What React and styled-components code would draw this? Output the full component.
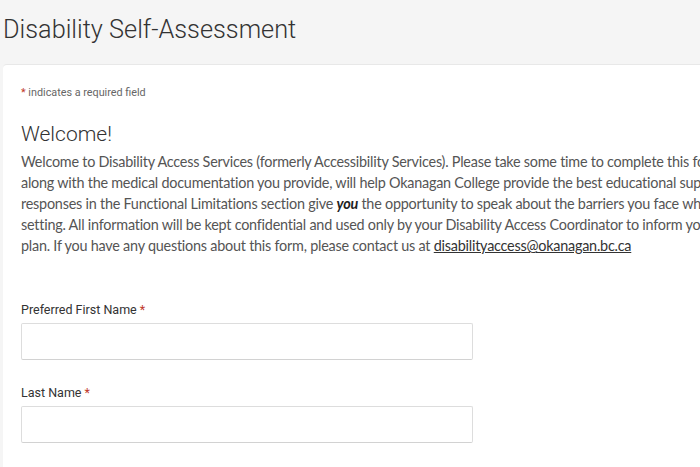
import React from 'react';
import styled, { createGlobalStyle } from 'styled-components';

const GlobalStyle = createGlobalStyle`
  html, body {
    margin: 0;
    padding: 0;
    background: #f5f5f5;
    overflow: hidden;
  }
  body {
    font-family: Roboto, "Liberation Sans", sans-serif;
    color: #333;
  }
`;

const Page = styled.div`
  padding: 14px 0 0 3px;
  width: 900px;
`;

const Title = styled.h1`
  margin: 0 0 18px;
  font-size: 25.3px;
  font-weight: 300;
  line-height: 32px;
  color: #333;
`;

const Card = styled.div`
  background: #fff;
  border-radius: 4px;
  border-top: 1px solid #e8e8e8;
  padding: 21px 18px 30px;
  min-height: 420px;
`;

const Required = styled.p`
  margin: 0 0 23px;
  font-size: 10.8px;
  color: #666;
`;

const Heading = styled.h2`
  margin: 0 0 5px;
  font-size: 21px;
  font-weight: 300;
  color: #333;
`;

const Intro = styled.p`
  margin: 0 0 46px;
  font-family: Lato, "Open Sans", sans-serif;
  font-size: 14.4px;
  letter-spacing: -0.23px;
  line-height: 21px;
  color: #555;
  white-space: nowrap;

  b {
    color: #222;
    font-weight: 700;
  }
  a {
    color: #333;
    text-decoration: underline;
  }
`;

const Star = styled.span`
  color: #c0392b;
`;

const Field = styled.div`
  display: flex;
  flex-direction: column;
  gap: 6px;
  margin-bottom: 25px;
  width: 452px;
`;

const Label = styled.label`
  font-size: 12.5px;
  color: #333;
`;

const Input = styled.input`
  height: 37px;
  box-sizing: border-box;
  border: 1px solid #ddd;
  border-bottom-color: #d2d2d2;
  border-radius: 2px;
  background: #fff;
  font-family: inherit;
`;

export default function App() {
  return (
    <>
      <GlobalStyle />
      <Page>
        <Title>Disability Self-Assessment</Title>
        <Card>
          <Required><Star>*</Star> indicates a required field</Required>
          <Heading>Welcome!</Heading>
          <Intro>
            Welcome to Disability Access Services (formerly Accessibility Services). Please take some time to complete this form. This form,<br />
            along with the medical documentation you provide, will help Okanagan College provide the best educational support. Your<br />
            responses in the Functional Limitations section give <b><i>you</i></b> the opportunity to speak about the barriers you face while in a learning<br />
            setting. All information will be kept confidential and used only by your Disability Access Coordinator to inform your accommodation<br />
            plan. If you have any questions about this form, please contact us at <a href="#">disabilityaccess@okanagan.bc.ca </a>
          </Intro>
          <Field>
            <Label>Preferred First Name <Star>*</Star></Label>
            <Input type="text" />
          </Field>
          <Field>
            <Label>Last Name <Star>*</Star></Label>
            <Input type="text" />
          </Field>
        </Card>
      </Page>
    </>
  );
}
